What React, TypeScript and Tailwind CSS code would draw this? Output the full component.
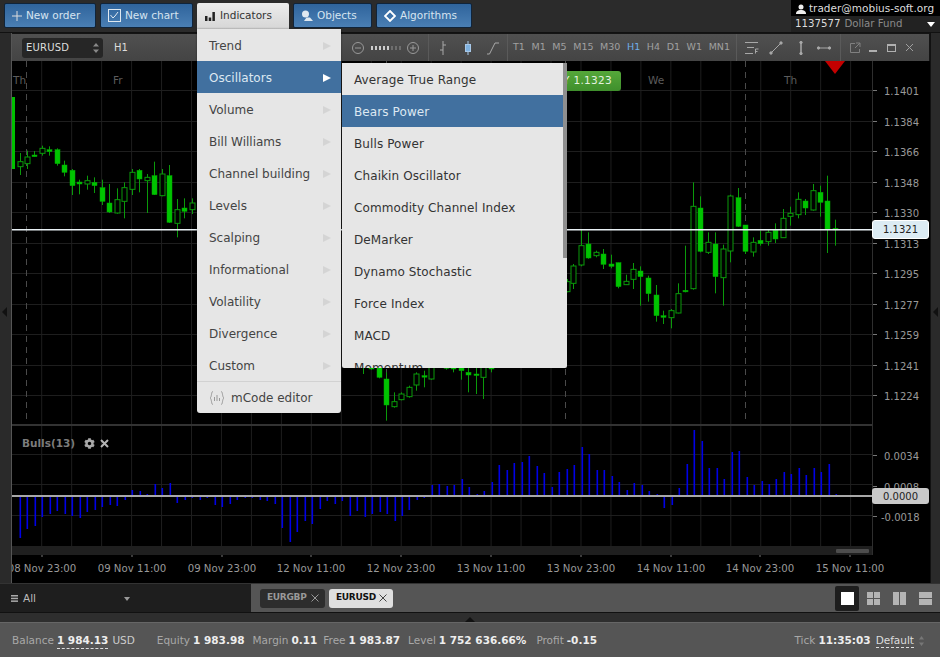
import type { ReactNode } from "react"
import { FaCog } from "react-icons/fa"

const font = { fontFamily: '"DejaVu Sans", sans-serif' }

// candle rows: x, wickTop, bodyTop, bodyBottom, wickBottom, filled (measured on 3x crops)
type Candle = [number, number, number, number, number, number]

const leftCandles: Candle[] = [
  [59, 192, 218, 233, 258, 0], [81, 185, 204, 224, 240, 0], [103, 186, 198, 203, 203, 1], [126, 170, 178, 193, 200, 0],
  [148, 172, 182, 188, 200, 1], [171, 178, 182, 224, 230, 1], [193, 215, 228, 250, 262, 1], [216, 240, 244, 290, 318, 1],
  [238, 272, 279, 285, 316, 1], [260, 260, 275, 285, 302, 0], [283, 265, 280, 290, 312, 1], [305, 272, 296, 337, 348, 1],
  [327, 285, 342, 369, 372, 1], [350, 298, 332, 372, 374, 0], [372, 280, 296, 337, 388, 0], [395, 240, 250, 301, 318, 0],
  [418, 240, 244, 270, 310, 1], [440, 255, 265, 275, 372, 0], [462, 218, 260, 317, 318, 1], [485, 240, 255, 320, 322, 0],
  [507, 228, 260, 400, 402, 1], [530, 330, 362, 403, 445, 0], [552, 328, 357, 367, 388, 1], [575, 328, 342, 362, 375, 0],
]

const midCandles: Candle[] = [
  [520, 70, 72, 74, 105, 1], [543, 70, 78, 90, 92, 1], [566, 70, 82, 115, 118, 1], [588, 100, 120, 198, 245, 1],
  [611, 160, 188, 203, 206, 0], [633, 160, 165, 182, 184, 0], [656, 140, 145, 173, 176, 0], [678, 100, 105, 138, 155, 0],
  [701, 95, 110, 113, 145, 1], [723, 70, 82, 120, 122, 0], [768, 70, 80, 88, 92, 1], [790, 70, 82, 90, 100, 1],
  [812, 70, 85, 95, 122, 1], [835, 85, 100, 108, 160, 1], [858, 85, 105, 108, 165, 1], [880, 70, 80, 115, 180, 0],
  [903, 70, 80, 90, 100, 1],
]

const rightCandles: Candle[] = [
  [22, 450, 458, 488, 490, 0], [39, 405, 411, 463, 480, 0], [62, 300, 350, 408, 412, 0], [85, 310, 345, 387, 389, 1],
  [107, 365, 370, 380, 385, 0], [130, 360, 375, 406, 420, 1], [152, 377, 405, 412, 418, 1], [175, 401, 401, 473, 478, 1],
  [197, 437, 457, 467, 468, 0], [219, 402, 421, 451, 480, 0], [241, 412, 426, 443, 530, 1], [264, 440, 447, 494, 518, 1],
  [287, 468, 498, 560, 578, 1], [309, 545, 560, 565, 585, 1], [332, 540, 545, 566, 598, 0], [354, 463, 494, 552, 553, 0],
  [376, 350, 484, 488, 490, 1], [399, 160, 232, 479, 482, 0], [421, 202, 237, 367, 370, 1], [443, 310, 340, 370, 375, 0],
  [466, 310, 345, 443, 493, 1], [488, 347, 360, 446, 530, 0], [511, 197, 201, 366, 400, 0], [533, 177, 206, 292, 294, 1],
  [556, 288, 288, 367, 375, 1], [578, 325, 340, 369, 383, 0], [601, 305, 334, 344, 350, 1], [623, 300, 310, 338, 350, 0],
  [646, 283, 304, 330, 342, 1], [668, 240, 268, 326, 327, 0], [690, 233, 253, 262, 290, 0], [713, 190, 211, 257, 268, 0],
  [735, 210, 216, 237, 258, 1], [758, 165, 185, 243, 245, 0], [780, 170, 190, 220, 263, 1], [802, 140, 216, 300, 372, 1],
  [825, 272, 298, 301, 350, 1],
]

const shift = (rows: Candle[], dx: number, dy: number): Candle[] =>
  rows.map(([x, a, b, c, d, f]) => [dx + x / 3, dy + a / 3, dy + b / 3, dy + c / 3, dy + d / 3, f])

const candles = [...shift(leftCandles, 0, 90), ...shift(midCandles, 190, 340), ...shift(rightCandles, 560, 130)]

// bulls power bars: height from the zero line (up is positive)
const barHeights = [
  -41, -32, -29, -20, -17, -14, -17, -19, -21, -15, -13, -10, -8, -9, -3, 5, 4, 1, 11, 7, 12, -6, -3, -1, -3, -1, -8, -10, -7, -3,
  -1, -1, -3, -4, -7, -31, -45, -35, -24, -27, -12, -4, -7, -4, -19, -14, -20, -17, -15, -17, -24, -19, -13, -3, -1, 10, 11, 9, 10,
  16, 8, 1, 4, 13, 30, 25, 32, 33, 39, 29, 22, 8, 23, 26, 30, 48, 41, 25, 25, 19, 13, 5, 12, 10, 4, 1, -11, -8, 7, 31, 65, 54, 27,
  27, 16, 43, 44, 18, 10, 14, 11, 16, 23, 21, 27, 20, 27, 23, 31, 1,
]

const gridX = Array.from({ length: 28 }, (_, i) => 41.7 + i * 29.96)
const prices = [
  ["1.1401", 91], ["1.1384", 122], ["1.1366", 152], ["1.1348", 183], ["1.1330", 213], ["1.1313", 244],
  ["1.1295", 274], ["1.1277", 305], ["1.1259", 335], ["1.1241", 366], ["1.1224", 396],
] as const
const times = [
  ["08 Nov 23:00", 42], ["09 Nov 11:00", 132], ["09 Nov 23:00", 222], ["12 Nov 11:00", 311], ["12 Nov 23:00", 401],
  ["13 Nov 11:00", 491], ["13 Nov 23:00", 581], ["14 Nov 11:00", 671], ["14 Nov 23:00", 760], ["15 Nov 11:00", 850],
] as const

function Chart() {
  return (
    <svg viewBox="12 62 918 519" className="block w-[918px] h-[519px]" style={font}>
      {gridX.map((x) => (
        <line key={x} x1={x} x2={x} y1={62} y2={547} stroke="#1e1e1e" />
      ))}
      {prices.map(([, y]) => (
        <line key={y} x1={12} x2={872} y1={y + 0.5} y2={y + 0.5} stroke="#1e1e1e" />
      ))}
      {[455.5, 485.5, 516.5].map((y) => (
        <line key={y} x1={12} x2={872} y1={y} y2={y} stroke="#1e1e1e" />
      ))}
      {[26.5, 386.5, 565.5, 745.5].map((x) => (
        <line key={x} x1={x} x2={x} y1={62} y2={425} stroke="#4a4a4a" strokeDasharray="6 5" />
      ))}
      <rect x={12} y={98} width={3} height={72} fill="#00c000" />
      {candles.map(([x, a, b, c, d, filled], i) => {
        const cx = Math.round(x) + 0.5
        return (
          <g key={i}>
            <line x1={cx} x2={cx} y1={a} y2={d} stroke="#0a9a0a" />
            {filled ? (
              <rect x={cx - 2.5} y={b} width={5} height={Math.max(c - b, 1.5)} fill="#00c400" stroke="#00a800" strokeWidth={0.5} />
            ) : (
              <rect x={cx - 2.5} y={b} width={5} height={c - b} fill="#000" stroke="#0a9a0a" />
            )}
          </g>
        )
      })}
      {barHeights.map((h, i) => {
        const x = Math.round(20 + i * 7.49)
        return <rect key={i} x={x - 0.5} y={h > 0 ? 496 - h : 498} width={1.6} height={Math.abs(h)} fill="#0000e6" />
      })}
      <rect x={12} y={230} width={860} height={1.5} fill="#e8f0f4" />
      <rect x={12} y={496} width={860} height={2} fill="#a8a8a8" />
      <rect x={12} y={425} width={860} height={2} fill="#333" />
      <rect x={12} y={547} width={860} height={9} fill="#1f1f1f" />
      <rect x={836} y={550} width={33} height={4} rx={1} fill="#4d4d4d" />
      <line x1={872.5} x2={872.5} y1={62} y2={556} stroke="#2e2e2e" />
      <polygon points="825,62 845,62 835,75" fill="#c40000" />
      {prices.map(([label, y]) => (
        <g key={label}>
          <line x1={873} x2={877} y1={y + 0.5} y2={y + 0.5} stroke="#777" />
          <text x={884} y={y + 5} fontSize={10} fill="#999">{label}</text>
        </g>
      ))}
      {[["0.0034", 456, 884], ["0.0008", 487, 884], ["-0.0018", 517, 881]].map(([label, y, x]) => (
        <g key={label}>
          <line x1={873} x2={877} y1={Number(y) + 0.5} y2={Number(y) + 0.5} stroke="#777" />
          <text x={Number(x)} y={Number(y) + 5} fontSize={10} fill="#999">{label}</text>
        </g>
      ))}
      {times.map(([label, x]) => (
        <g key={label}>
          <line x1={x} x2={x} y1={556} y2={558} stroke="#777" />
          <text x={x} y={573} fontSize={10.2} fill="#999" textAnchor="middle">{label}</text>
        </g>
      ))}
      {[["Th", 13], ["Fr", 113], ["We", 648], ["Th", 784]].map(([label, x]) => (
        <text key={String(x)} x={Number(x)} y={85} fontSize={10.5} fill="#5c5c5c">{label}</text>
      ))}
    </svg>
  )
}

function TopButton({ icon, label, width, active }: { icon: ReactNode; label: string; width: string; active?: boolean }) {
  return (
    <div
      className={
        active
          ? `${width} h-[26px] mt-[3px] pl-[8px] flex items-center gap-[5px] rounded-t-[2px] bg-gradient-to-b from-[#ececec] to-[#d6d6d6] text-[#333]`
          : `${width} h-[25px] mt-[3px] pl-[7px] flex items-center gap-[4px] rounded-[2px] border border-[#10243a] bg-gradient-to-b from-[#2f649c] to-[#4a7fb4] text-[#d6e4f0]`
      }
    >
      {icon}
      <span className="text-[10.5px]">{label}</span>
    </div>
  )
}

const menuItems = ["Trend", "Oscillators", "Volume", "Bill Williams", "Channel building", "Levels", "Scalping", "Informational", "Volatility", "Divergence", "Custom"]
const subItems = ["Average True Range", "Bears Power", "Bulls Power", "Chaikin Oscillator", "Commodity Channel Index", "DeMarker", "Dynamo Stochastic", "Force Index", "MACD", "Momentum"]

function IndicatorsMenu() {
  return (
    <div className="absolute left-[197px] top-[29px] w-[144px] h-[384px] bg-[#e6e6e6] rounded-b-[3px] shadow-[0_0_2px_rgba(0,0,0,0.5)] flex flex-col text-[12px] text-[#444]">
      {menuItems.map((item) => (
        <div
          key={item}
          className={`h-[32px] shrink-0 flex items-center justify-between pl-3 pr-[10px] pt-px ${
            item === "Oscillators" ? "bg-[#41709f] text-[#dde8f2]" : ""
          }`}
        >
          <span>{item}</span>
          <span className={`w-0 h-0 border-y-[4px] border-y-transparent border-l-[8px] ${
            item === "Oscillators" ? "border-l-white" : "border-l-[#d4d4d4]"
          }`} />
        </div>
      ))}
      <div className="border-t border-[#d2d2d2] flex-1 flex items-center pl-3 gap-[6px]">
        <svg width="16" height="16" viewBox="0 0 16 16" fill="none" stroke="#999" strokeWidth="1">
          <path d="M4 1.5C2 1.5 3 7 1 8c2 1 1 6.5 3 6.5M12 1.5c2 0 1 5.5 3 6.5-2 1-1 6.5-3 6.5" />
          <path d="M5.5 7v4M8 5v6M10.5 8v3" />
        </svg>
        <span>mCode editor</span>
      </div>
    </div>
  )
}

function SubMenu() {
  return (
    <div className="absolute left-[342px] top-[63px] w-[225px] h-[305px] overflow-hidden bg-[#e6e6e6] rounded-b-[2px] text-[12px] tracking-[0.1px] text-[#333] flex">
      <div className="flex-1 flex flex-col">
        {subItems.map((item) => (
          <div
            key={item}
            className={`h-[32px] shrink-0 flex items-center pl-3 pt-px ${
              item === "Bears Power" ? "bg-[#41709f] text-[#dde8f2]" : ""
            }`}
          >
            {item}
          </div>
        ))}
      </div>
      <div className="w-[4px] h-[195px] bg-[#8f8f8f] shrink-0" />
    </div>
  )
}

const frames = [
  ["T1", 0], ["M1", 0], ["M5", 0], ["M15", 0], ["M30", 0], ["H1", 1], ["H4", 0], ["D1", 0], ["W1", 0], ["MN1", 0],
] as const

function Toolbar() {
  return (
    <div className="h-[27px] w-[917px] bg-gradient-to-b from-[#505050] to-[#444] flex items-center text-[#a8a8a8]">
      <div className="ml-[10px] w-[81px] h-[20px] rounded-[3px] bg-[#262626] flex items-center justify-between pl-[4px] pr-[4px] text-[10px] tracking-[0.2px] text-[#ddd]">
        <span>EURUSD</span>
        <svg width="6" height="12" viewBox="0 0 6 12" fill="#888"><path d="M3 1l3 3.5H0zM3 11L0 7.5h6z" /></svg>
      </div>
      <span className="ml-[11px] w-[14px] text-[10px] text-[#ddd]">H1</span>
      <div className="ml-[223px] flex items-center">
        <svg width="14" height="14" viewBox="0 0 14 14" fill="none" stroke="#999"><circle cx="7" cy="7" r="5.5" /><path d="M4 7h6" /></svg>
        <div className="ml-[6px] flex gap-[2px] items-center">
          {[0, 1, 2, 3, 4, 5, 6, 7].map((i) => (
            <span key={i} className={`w-[2px] h-[4px] ${i < 5 ? "bg-[#ccc]" : "bg-[#6e6e6e]"}`} />
          ))}
        </div>
        <svg className="ml-[5px]" width="14" height="14" viewBox="0 0 14 14" fill="none" stroke="#999"><circle cx="7" cy="7" r="5.5" /><path d="M4 7h6M7 4v6" /></svg>
      </div>
      <div className="ml-[8px] w-px h-[27px] bg-[#5a5a5a]" />
      <svg className="ml-[8px]" width="12" height="16" viewBox="0 0 12 16" fill="none" stroke="#a8a8a8"><path d="M6 1v14M3 10h3M6 5h3" /></svg>
      <svg className="ml-[13px]" width="12" height="16" viewBox="0 0 12 16" fill="#7fb2e0" stroke="#a8c8e8"><path d="M6 1v14" /><rect x="3.5" y="4.5" width="5" height="7" /></svg>
      <svg className="ml-[12px]" width="14" height="14" viewBox="0 0 14 14" fill="none" stroke="#a8a8a8"><path d="M1 13h2.5L9 2h4" /></svg>
      <div className="ml-[7px] w-px h-[27px] bg-[#5a5a5a]" />
      <div className="ml-[5px] w-[217px] flex justify-between text-[9.5px]">
        {frames.map(([label, on]) => (
          <span key={label} className={on ? "text-[#70aeea]" : "text-[#a0a0a0]"}>{label}</span>
        ))}
      </div>
      <div className="ml-[6px] w-px h-[27px] bg-[#5a5a5a]" />
      <svg className="ml-[7px]" width="16" height="14" viewBox="0 0 16 14" fill="none" stroke="#a8a8a8"><path d="M1 1.5h13M3 6.5h7M1 12.5h8M11.5 12.5V8h3M11.5 10.5h2" /></svg>
      <svg className="ml-[9px]" width="14" height="14" viewBox="0 0 14 14" fill="#a8a8a8" stroke="#a8a8a8"><path d="M2 12L12 2" /><circle cx="2" cy="12" r="1.2" /><circle cx="12" cy="2" r="1.2" /></svg>
      <svg className="ml-[15px]" width="6" height="14" viewBox="0 0 6 14" fill="#a8a8a8" stroke="#a8a8a8"><path d="M3 1v12" strokeWidth="1.5" /><circle cx="3" cy="1.5" r="1.2" /><circle cx="3" cy="12.5" r="1.2" /></svg>
      <svg className="ml-[13px]" width="14" height="6" viewBox="0 0 14 6" fill="#a8a8a8" stroke="#a8a8a8"><path d="M1 3h12" /><circle cx="1.5" cy="3" r="1.2" /><circle cx="12.5" cy="3" r="1.2" /></svg>
      <div className="ml-[9px] w-px h-[27px] bg-[#5a5a5a]" />
      <svg className="ml-[8px]" width="12" height="12" viewBox="0 0 12 12" fill="none" stroke="#808080"><path d="M6 1.5H1.5v9h9V7M7 1h4v4M11 1L6 6" /></svg>
      <span className="ml-[8px] mt-[6px] w-[8px] h-[2px] bg-[#b0b0b0]" />
      <span className="ml-[10px] w-[9px] h-[8px] border border-t-2 border-[#b0b0b0]" />
      <svg className="ml-[9px]" width="9" height="9" viewBox="0 0 9 9" stroke="#a0a0a0"><path d="M1 1l7 7M8 1L1 8" /></svg>
    </div>
  )
}

function StatusItem({ label, value, className }: { label: string; value: string; className: string }) {
  return (
    <div className={`flex items-center gap-[3px] ${className}`}>
      <span className="text-[#a8a8a8]">{label}</span>
      <span className="font-bold text-[#eee]">{value}</span>
    </div>
  )
}

export default function App() {
  return (
    <div className="relative w-[940px] h-[657px] overflow-hidden bg-[#1c1c1c] flex flex-col" style={font}>
      {/* top bar */}
      <div className="h-[33px] shrink-0 bg-[#2b2b2b] flex border-b border-[#111]">
        <div className="flex gap-[4px] pl-[4px]">
          <TopButton width="w-[92px]" label="New order" icon={
            <svg width="10" height="10" viewBox="0 0 10 10" stroke="#ddd"><path d="M5 0v10M0 5h10" /></svg>
          } />
          <TopButton width="w-[93px]" label="New chart" icon={
            <svg width="13" height="13" viewBox="0 0 13 13" fill="none" stroke="#dfe8f0"><rect x="0.5" y="0.5" width="12" height="12" /><path d="M2.5 6l2.5 3 2-2 3-4" /></svg>
          } />
          <TopButton active width="w-[92px]" label="Indicators" icon={
            <svg width="10" height="9" viewBox="0 0 10 9" fill="#222"><rect y="4" width="2.5" height="5" /><rect x="3.7" y="5.5" width="2.5" height="3.5" /><rect x="7.4" width="2.5" height="9" /></svg>
          } />
          <TopButton width="w-[79px]" label="Objects" icon={
            <svg width="12" height="11" viewBox="0 0 12 11" fill="#dfe8f0"><circle cx="4.5" cy="4" r="3.5" /><path d="M3 11l2.5-3.5H9L12 11z" /></svg>
          } />
          <TopButton width="w-[96px]" label="Algorithms" icon={
            <svg width="12" height="12" viewBox="0 0 12 12" fill="none" stroke="#fff" strokeWidth="1.8"><path d="M6 1l5 5-5 5-5-5z" /></svg>
          } />
        </div>
        <div className="ml-auto w-[149px] h-[32px] flex flex-col text-[10.5px]">
          <div className="h-[16px] pt-px bg-black flex items-center pl-[5px] gap-[3px] text-[#ddd]">
            <svg width="10" height="10" viewBox="0 0 10 10" fill="#eee"><circle cx="5" cy="3" r="2.5" /><path d="M0 10c0-3 2-4 5-4s5 1 5 4z" /></svg>
            <span>trader@mobius-soft.org</span>
          </div>
          <div className="flex-1 bg-[#222] flex items-center pl-[4px] gap-[4px] text-[10.2px]">
            <span className="text-[#ddd]">1137577</span>
            <span className="text-[#8a8a8a]">Dollar Fund</span>
            <span className="ml-auto mr-[5px] w-0 h-0 border-x-[4px] border-x-transparent border-t-[5px] border-t-white" />
          </div>
        </div>
      </div>

      {/* workspace */}
      <div className="flex-1 flex min-h-0">
        <div className="w-[12px] shrink-0 bg-[#2a2a2a] border-r border-[#555] flex items-center">
          <span className="ml-[2px] mt-[7px] w-0 h-0 border-y-[5px] border-y-transparent border-r-[5px] border-r-[#111]" />
        </div>
        <div className="w-[918px] pt-[1px] flex flex-col shrink-0 bg-[#141414]">
          <Toolbar />
          <div className="relative flex-1 bg-black">
            <Chart />
            <div className="absolute left-[508px] top-[10px] w-[101px] h-[20px] rounded-[3px] bg-gradient-to-b from-[#55a83a] to-[#3f8f2c] flex items-center justify-end pr-[9px] text-[10.5px] tracking-[0.3px] text-[#e6f2e0]">
              BUY 1.1323
            </div>
            <div className="absolute left-[860px] top-[159px] w-[57px] h-[19px] rounded-[3px] border border-white bg-[#dcebf3] flex items-center justify-center text-[10px] text-[#222]">
              1.1321
            </div>
            <div className="absolute left-[860px] top-[427px] w-[57px] h-[16px] rounded-[3px] bg-[#c9c9c9] flex items-center justify-center text-[10px] text-[#222]">
              0.0000
            </div>
            <div className="absolute left-[10px] top-[375px] flex items-center text-[10.5px] font-bold text-[#7c7c7c]">
              Bulls(13)
              <FaCog className="ml-[9px] text-[#a8a8a8]" size={11} />
              <svg className="ml-[5px]" width="9" height="9" viewBox="0 0 9 9" stroke="#b4b4b4" strokeWidth="2"><path d="M1 1l7 7M8 1L1 8" /></svg>
            </div>
          </div>
        </div>
        <div className="flex-1 bg-[#2a2a2a] border-l border-[#111] flex items-center justify-center">
          <span className="mt-[7px] w-0 h-0 border-y-[5px] border-y-transparent border-r-[5px] border-r-[#111]" />
        </div>
      </div>

      {/* tabs */}
      <div className="h-[29px] shrink-0 flex bg-[#555] border-t border-[#333]">
        <div className="w-[251px] bg-[#1e1e1e] flex items-center pl-[11px] pt-px text-[10.5px] text-[#bbb]">
          <svg width="7" height="7" viewBox="0 0 7 7" fill="#aaa"><rect width="7" height="1.5" /><rect y="2.7" width="7" height="1.5" /><rect y="5.4" width="7" height="1.5" /></svg>
          <span className="ml-[5px]">All</span>
          <span className="ml-[88px] w-0 h-0 border-x-[3.5px] border-x-transparent border-t-[4px] border-t-[#999]" />
        </div>
        <div className="flex items-center ml-[9px] gap-[4px] text-[9px] tracking-[-0.3px] font-bold">
          <div className="w-[65px] h-[19px] rounded-[3px] bg-[#2d2d2d] flex items-center justify-between pl-[7px] pr-[6px] text-[#999]">
            EURGBP
            <svg width="8" height="8" viewBox="0 0 8 8" stroke="#999"><path d="M.5.5l7 7M7.5.5l-7 7" /></svg>
          </div>
          <div className="w-[64px] h-[19px] rounded-[3px] bg-[#dfdfdf] flex items-center justify-between pl-[7px] pr-[6px] text-[#111]">
            EURUSD
            <svg width="8" height="8" viewBox="0 0 8 8" stroke="#444"><path d="M.5.5l7 7M7.5.5l-7 7" /></svg>
          </div>
        </div>
        <div className="ml-auto flex items-center pr-[8px]">
          <div className="w-[24px] h-[25px] rounded-[2px] bg-[#1e1e1e] flex items-center justify-center">
            <span className="w-[13px] h-[13px] bg-white" />
          </div>
          <svg className="ml-[8px]" width="13" height="13" viewBox="0 0 13 13" fill="#b4b4b4"><rect width="6" height="6" /><rect x="7" width="6" height="6" /><rect y="7" width="6" height="6" /><rect x="7" y="7" width="6" height="6" /></svg>
          <svg className="ml-[13px]" width="13" height="13" viewBox="0 0 13 13" fill="#b4b4b4"><rect width="6" height="13" /><rect x="7" width="6" height="13" /></svg>
          <svg className="ml-[13px]" width="13" height="13" viewBox="0 0 13 13" fill="#b4b4b4"><rect width="13" height="6" /><rect y="7" width="13" height="6" /></svg>
        </div>
      </div>

      {/* collapse strip */}
      <div className="h-[10px] shrink-0 bg-[#2e2e2e] border-t border-[#111] flex justify-center items-end">
        <span className="w-0 h-0 border-x-[5px] border-x-transparent border-b-[5px] border-b-[#111]" />
      </div>

      {/* account status */}
      <div className="h-[35px] shrink-0 pt-[2px] bg-[#555] border-t border-[#666] flex items-center pl-[12px] text-[10.5px]">
        <span className="text-[#a8a8a8]">Balance</span>
        <span className="ml-[3px] font-bold text-[#eee] border-b border-dashed border-[#ddd]">1 984.13</span>
        <span className="ml-[4px] text-[#ccc]">USD</span>
        <StatusItem className="ml-[22px]" label="Equity" value="1 983.98" />
        <StatusItem className="ml-[8px]" label="Margin" value="0.11" />
        <StatusItem className="ml-[6px]" label="Free" value="1 983.87" />
        <StatusItem className="ml-[8px]" label="Level" value="1 752 636.66%" />
        <StatusItem className="ml-[10px]" label="Profit" value="-0.15" />
        <div className="ml-auto flex items-center pr-[16px]">
          <StatusItem className="" label="Tick" value="11:35:03" />
          <span className="ml-[5px] text-[#ddd] border-b border-dashed border-[#ddd] leading-[13px]">Default</span>
          <svg className="ml-[5px]" width="5" height="10" viewBox="0 0 5 10" fill="#777"><path d="M2.5 0L5 3.5H0zM2.5 10L0 6.5h5z" /></svg>
        </div>
      </div>

      <IndicatorsMenu />
      <SubMenu />
    </div>
  )
}
